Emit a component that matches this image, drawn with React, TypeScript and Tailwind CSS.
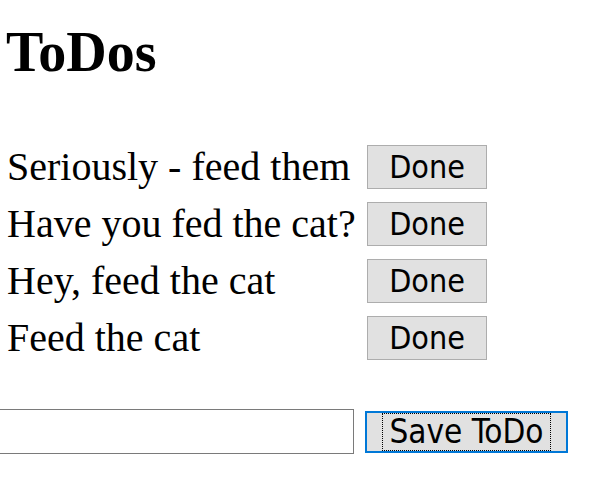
export default function App() {
  const todos = [
    "Seriously - feed them",
    "Have you fed the cat?",
    "Hey, feed the cat",
    "Feed the cat",
  ];
  return (
    <div className="w-[604px] h-[485px] overflow-hidden bg-white text-black">
      <h1 className="pl-[6px] pt-[21px] text-[56px] leading-[62px] font-bold font-['Liberation_Serif',serif]">
        ToDos
      </h1>
      <div className="mt-[55px] flex flex-col">
        {todos.map((t) => (
          <div key={t} className="flex items-center h-[57px]">
            <div className="w-[367px] pl-[7px] text-[40px] leading-[44px] font-['Liberation_Serif',serif] whitespace-nowrap">
              {t}
            </div>
            <button className="w-[120px] h-[44px] border border-[#adadad] bg-[#e1e1e1] text-[32px] leading-none font-['DejaVu_Sans_Condensed','DejaVu_Sans',sans-serif] flex items-center justify-center">
              Done
            </button>
          </div>
        ))}
      </div>
      <div className="mt-[43px] flex items-center h-[45px]">
        <input
          type="text"
          className="ml-[-20px] w-[374px] h-[45px] border border-[#7a7a7a] bg-white outline-none"
        />
        <button className="ml-[11px] w-[203px] h-[42px] border-2 border-[#0078d7] bg-[#e1e1e1] flex items-stretch justify-center py-0">
          <span className="border border-dotted border-black px-[6px] flex items-center text-[33px] leading-none font-['DejaVu_Sans_Condensed','DejaVu_Sans',sans-serif]">
            Save ToDo
          </span>
        </button>
      </div>
    </div>
  );
}
